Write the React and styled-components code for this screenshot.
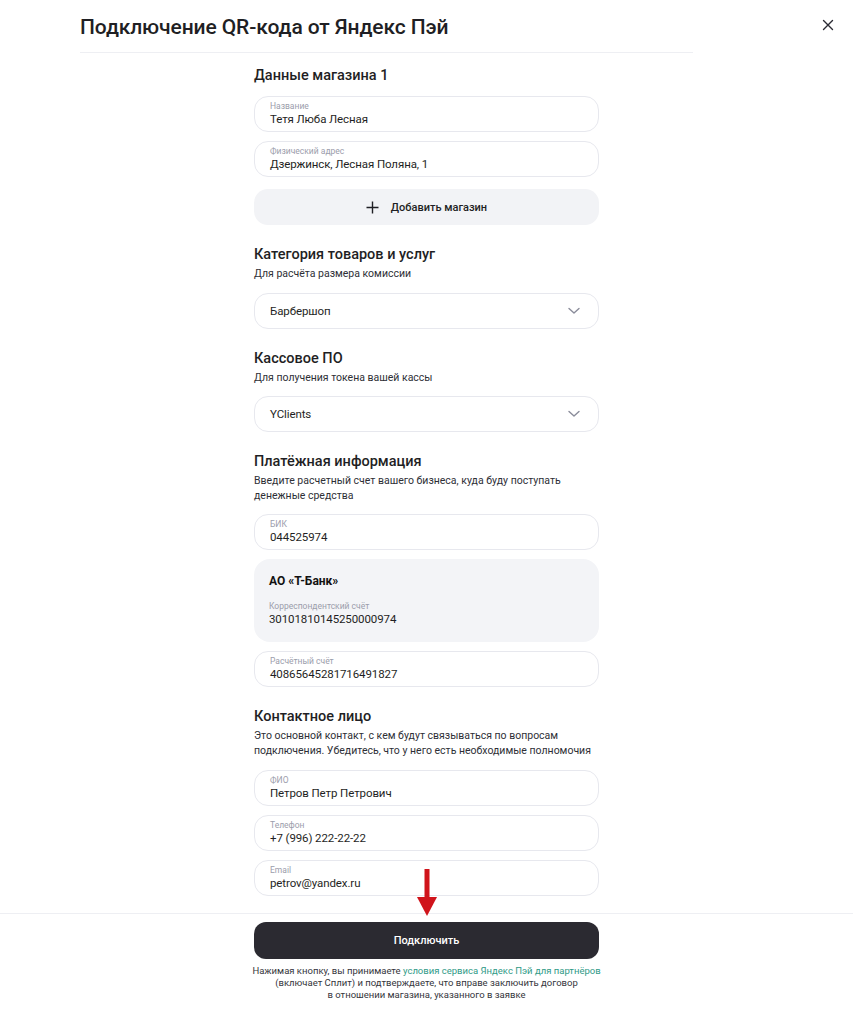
import React from "react";
import styled, { createGlobalStyle } from "styled-components";

const Global = createGlobalStyle`
  html, body { margin: 0; padding: 0; background: #fff; }
  body { font-family: Roboto, "Noto Sans", sans-serif; color: #1f1f24; -webkit-font-smoothing: antialiased; }
  * { box-sizing: border-box; }
`;

const Page = styled.div`
  position: relative;
  width: 853px;
  min-height: 1024px;
  display: flex;
  flex-direction: column;
`;

const Header = styled.header`
  display: flex;
  align-items: flex-start;
  padding-left: 80px;
`;

const TitleBlock = styled.div`
  width: 613px;
  height: 53px;
  border-bottom: 1px solid #eeeff3;
  padding-top: 13px;
`;

const Title = styled.h1`
  margin: 0;
  font-size: 21px;
  line-height: 28px;
  font-weight: 500;
  letter-spacing: -0.1px;
  color: #1f1f24;
`;

const CloseBtn = styled.button`
  margin-left: auto;
  margin-right: 15px;
  margin-top: 15px;
  width: 20px;
  height: 20px;
  padding: 0;
  border: none;
  background: none;
  display: flex;
  align-items: center;
  justify-content: center;
  color: #2a2b33;
`;

const Content = styled.main`
  width: 345px;
  margin: 0 auto;
  padding-top: 13px;
  padding-bottom: 17px;
  display: flex;
  flex-direction: column;
`;

const Section = styled.section`
  display: flex;
  flex-direction: column;
  & + & { margin-top: 20px; }
`;

const SectionTitle = styled.h2`
  margin: 0;
  font-size: 14.5px;
  line-height: 20px;
  font-weight: 500;
  color: #1f1f24;
`;

const SectionDesc = styled.p`
  margin: 2px 0 0;
  font-size: 10.5px;
  line-height: 14.5px;
  color: #2e2f36;
`;

const Stack = styled.div`
  display: flex;
  flex-direction: column;
  gap: 9px;
  margin-top: ${(p) => p.$top || 10}px;
`;

const Field = styled.div`
  height: 36px;
  border: 1px solid #e7e8ee;
  border-radius: 14px;
  padding: 4px 15px 0;
  display: flex;
  flex-direction: column;
  background: #fff;
`;

const Label = styled.span`
  font-size: 8.5px;
  line-height: 10px;
  color: #9b9dab;
`;

const Value = styled.span`
  font-size: 11.5px;
  line-height: 16px;
  letter-spacing: -0.1px;
  color: #1f1f24;
`;

const Select = styled.div`
  height: 36px;
  border: 1px solid #e7e8ee;
  border-radius: 14px;
  padding: 0 18px 0 15px;
  display: flex;
  align-items: center;
  justify-content: space-between;
  font-size: 11.5px;
  letter-spacing: -0.1px;
  color: #1f1f24;
`;

const AddButton = styled.button`
  height: 36px;
  margin-top: 3px;
  border: none;
  border-radius: 14px;
  background: #f2f3f6;
  display: flex;
  align-items: center;
  justify-content: center;
  gap: 12px;
  font-family: inherit;
  font-size: 11px;
  font-weight: 500;
  color: #1f1f24;
`;

const BankCard = styled.div`
  background: #f3f4f7;
  border-radius: 16px;
  padding: 14px 15px 15px;
  display: flex;
  flex-direction: column;
`;

const BankName = styled.span`
  font-size: 12px;
  line-height: 16px;
  font-weight: 700;
  color: #111;
  margin-bottom: 12px;
`;

const Footer = styled.footer`
  border-top: 1px solid #eeeff3;
  padding: 8px 0 20px;
  display: flex;
  flex-direction: column;
  align-items: center;
`;

const SubmitButton = styled.button`
  width: 345px;
  height: 37px;
  border: none;
  border-radius: 12px;
  background: #2b2a31;
  color: #fff;
  font-family: inherit;
  font-size: 11px;
  font-weight: 500;
`;

const Terms = styled.p`
  margin: 6px 0 0;
  width: 360px;
  text-align: center;
  font-size: 9.5px;
  line-height: 12px;
  color: #34353b;
`;

const Link = styled.a`
  color: #2f9a87;
  text-decoration: none;
`;

const Arrow = styled.svg`
  position: absolute;
  left: 416px;
  top: 869px;
`;

const Chevron = () => (
  <svg width="12" height="8" viewBox="0 0 12 8" fill="none">
    <path d="M1 1.5l5 4.5 5-4.5" stroke="#8a8c9a" strokeWidth="1.4" strokeLinecap="round" strokeLinejoin="round" />
  </svg>
);

const Plus = () => (
  <svg width="13" height="13" viewBox="0 0 13 13">
    <path d="M6.5 0.5v12M0.5 6.5h12" stroke="#1f1f24" strokeWidth="1.4" />
  </svg>
);

const Close = () => (
  <svg width="12" height="12" viewBox="0 0 12 12">
    <path d="M1.5 1.5l9 9M10.5 1.5l-9 9" stroke="#2a2b33" strokeWidth="1.4" strokeLinecap="round" />
  </svg>
);

const InputField = ({ label, value }) => (
  <Field>
    <Label>{label}</Label>
    <Value>{value}</Value>
  </Field>
);

export default function App() {
  return (
    <>
      <Global />
      <Page>
        <Header>
          <TitleBlock>
            <Title>Подключение QR-кода от Яндекс Пэй</Title>
          </TitleBlock>
          <CloseBtn aria-label="Закрыть"><Close /></CloseBtn>
        </Header>

        <Content>
          <Section>
            <SectionTitle>Данные магазина 1</SectionTitle>
            <Stack>
              <InputField label="Название" value="Тетя Люба Лесная" />
              <InputField label="Физический адрес" value="Дзержинск, Лесная Поляна, 1" />
              <AddButton><Plus />Добавить магазин</AddButton>
            </Stack>
          </Section>

          <Section>
            <SectionTitle>Категория товаров и услуг</SectionTitle>
            <SectionDesc>Для расчёта размера комиссии</SectionDesc>
            <Stack $top={11}>
              <Select>Барбершоп<Chevron /></Select>
            </Stack>
          </Section>

          <Section>
            <SectionTitle>Кассовое ПО</SectionTitle>
            <SectionDesc>Для получения токена вашей кассы</SectionDesc>
            <Stack $top={11}>
              <Select>YClients<Chevron /></Select>
            </Stack>
          </Section>

          <Section>
            <SectionTitle>Платёжная информация</SectionTitle>
            <SectionDesc>Введите расчетный счет вашего бизнеса, куда буду поступать денежные средства</SectionDesc>
            <Stack $top={11}>
              <InputField label="БИК" value="044525974" />
              <BankCard>
                <BankName>АО «Т-Банк»</BankName>
                <Label>Корреспондентский счёт</Label>
                <Value>30101810145250000974</Value>
              </BankCard>
              <InputField label="Расчётный счёт" value="40865645281716491827" />
            </Stack>
          </Section>

          <Section>
            <SectionTitle>Контактное лицо</SectionTitle>
            <SectionDesc>Это основной контакт, с кем будут связываться по вопросам подключения. Убедитесь, что у него есть необходимые полномочия</SectionDesc>
            <Stack $top={12}>
              <InputField label="ФИО" value="Петров Петр Петрович" />
              <InputField label="Телефон" value="+7 (996) 222-22-22" />
              <InputField label="Email" value="petrov@yandex.ru" />
            </Stack>
          </Section>
        </Content>

        <Footer>
          <SubmitButton>Подключить</SubmitButton>
          <Terms>
            Нажимая кнопку, вы принимаете <Link href="#">условия сервиса Яндекс Пэй для партнёров</Link> (включает Сплит) и подтверждаете, что вправе заключить договор<br />в отношении магазина, указанного в заявке
          </Terms>
        </Footer>

        <Arrow width="22" height="48" viewBox="0 0 22 48">
          <rect x="8.5" y="0" width="5" height="30" fill="#d0141b" />
          <path d="M1 28h20L11 47z" fill="#d0141b" />
        </Arrow>
      </Page>
    </>
  );
}
